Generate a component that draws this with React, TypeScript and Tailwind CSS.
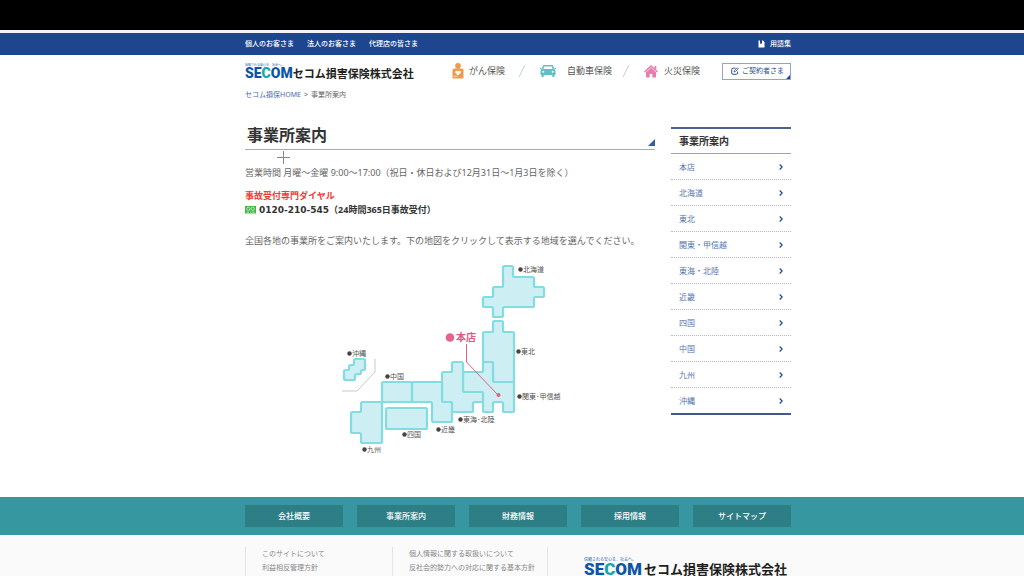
import React from "react";

type Point = [number, number];

const topLinks = ["個人のお客さま", "法人のお客さま", "代理店の皆さま"];
const offices = ["本店", "北海道", "東北", "関東・甲信越", "東海・北陸", "近畿", "四国", "中国", "九州", "沖縄"];
const footerButtons = ["会社概要", "事業所案内", "財務情報", "採用情報", "サイトマップ"];

const regions: Point[][] = [
  [[503, 266], [513, 266], [513, 277], [534, 277], [534, 287], [544, 287], [544, 297], [534, 297], [534, 307], [503, 307], [503, 317], [493, 317], [493, 307], [483, 307], [483, 297], [493, 297], [493, 287], [503, 287]],
  [[493, 321], [503, 321], [503, 332], [514, 332], [514, 382], [493, 382], [493, 362], [483, 362], [483, 332], [493, 332]],
  [[483, 362], [493, 362], [493, 382], [514, 382], [514, 412], [503, 412], [503, 402], [493, 402], [493, 412], [483, 412], [483, 392], [463, 392], [463, 372], [483, 372]],
  [[452, 362], [463, 362], [463, 392], [483, 392], [483, 402], [473, 402], [473, 412], [452, 412], [452, 402], [442, 402], [442, 372], [452, 372]],
  [[412, 382], [442, 382], [442, 402], [452, 402], [452, 422], [432, 422], [432, 402], [412, 402]],
  [[382, 382], [412, 382], [412, 402], [382, 402]],
  [[361, 402], [382, 402], [382, 443], [361, 443], [361, 433], [351, 433], [351, 412], [361, 412]],
  [[386, 408], [427, 408], [427, 429], [386, 429]],
  [[354, 359], [365, 359], [365, 370], [361, 370], [361, 374], [355, 374], [355, 380], [344, 380], [344, 370], [349, 370], [349, 365], [354, 365]],
];

const labels = [
  { name: "北海道", x: 520, y: 270 },
  { name: "東北", x: 518, y: 352 },
  { name: "関東･甲信越", x: 519, y: 397 },
  { name: "東海･北陸", x: 460, y: 420 },
  { name: "近畿", x: 438, y: 430 },
  { name: "四国", x: 404, y: 435 },
  { name: "九州", x: 364, y: 450 },
  { name: "中国", x: 387, y: 377 },
  { name: "沖縄", x: 349, y: 354 },
];

// Closed outline through the points, each corner rounded by r.
function roundedPath(points: Point[], r: number) {
  const n = points.length;
  const toward = (a: Point, b: Point): Point => [
    a[0] + Math.sign(b[0] - a[0]) * r,
    a[1] + Math.sign(b[1] - a[1]) * r,
  ];
  const parts = points.map((p, i) => {
    const start = toward(p, points[(i + n - 1) % n]);
    const end = toward(p, points[(i + 1) % n]);
    return `${i === 0 ? "M" : "L"}${start.join(" ")}Q${p.join(" ")} ${end.join(" ")}`;
  });
  return parts.join("") + "Z";
}

function Container({ className = "", children }: { className?: string; children: React.ReactNode }) {
  return (
    <div className="pl-3">
      <div className={`mx-auto max-w-[546px] ${className}`}>{children}</div>
    </div>
  );
}

function Logo({ large = false }: { large?: boolean }) {
  return (
    <a href="#home" className="block whitespace-nowrap">
      <span className={`block text-[#2b62ad] ${large ? "text-[4px] leading-[5px]" : "text-[3px] leading-[4px]"}`}>
        信頼される安心を、社会へ。
      </span>
      <span className={`flex items-center ${large ? "h-[14px] gap-0.5" : "h-[13px]"}`}>
        <span
          className={`font-['Roboto',sans-serif] font-black text-[#0f55a5] ${large ? "text-[17px] leading-[14px]" : "text-[14px] leading-[13px]"}`}
        >
          SE<span className="text-[#1aa5a8]">C</span>OM
        </span>
        <span
          className={`font-bold text-[#231f20] ${large ? "text-[13px] leading-[14px]" : "text-[11px] leading-[13px]"}`}
        >
          セコム損害保険株式会社
        </span>
      </span>
    </a>
  );
}

function Slash() {
  return (
    <svg width="8" height="14" viewBox="0 0 8 14" aria-hidden="true">
      <path d="M1 13L7 1" stroke="#c3cfd6" strokeWidth="1" />
    </svg>
  );
}

function PersonIcon() {
  return (
    <svg width="12" height="16" viewBox="0 0 12 16" aria-hidden="true">
      <circle cx="6" cy="2.900" r="2.800" fill="#f19a4a" />
      <path d="M2 5.500H10Q11.500 5.500 11.500 7.500V15.500H.5V7.500Q.5 5.500 2 5.500Z" fill="#f19a4a" />
      <path d="M6 12.500L3.300 9.800Q2.800 8 4.300 7.700Q5.500 7.600 6 8.700Q6.500 7.600 7.700 7.700Q9.200 8 8.700 9.800Z" fill="#fff" />
      <path d="M1.500 13.300H5.500" stroke="#fff" strokeWidth=".6" />
    </svg>
  );
}

function CarIcon() {
  return (
    <svg width="16" height="14" viewBox="0 0 16 14" aria-hidden="true">
      <path
        d="M3.700 1H12.300Q13 1 13.200 1.700L14.200 5Q15.500 5.400 15.500 7V11H14.500V12.200Q14.500 13.200 13.500 13.200T12.300 12.200V11H3.700V12.200Q3.700 13.200 2.500 13.200T1.500 12.200V11H.5V7Q.5 5.400 1.800 5L2.800 1.700Q3 1 3.700 1Z"
        fill="#62bfc6"
      />
      <path d="M4.200 2.400H11.800L12.600 5H3.400Z" fill="#fff" />
      <circle cx="3.300" cy="7.800" r="1" fill="#fff" />
      <circle cx="12.700" cy="7.800" r="1" fill="#fff" />
      <path d="M0 4.300H1.500M14.500 4.300H16" stroke="#62bfc6" strokeWidth="1.200" />
    </svg>
  );
}

function HouseIcon() {
  return (
    <svg width="14" height="13" viewBox="0 0 14 13" aria-hidden="true">
      <path d="M7 0L14 6.500L13 7.500L7 2.200L1 7.500L0 6.500Z" fill="#e77fae" />
      <path d="M10.500 1H12.300V5L10.500 3.400Z" fill="#e77fae" />
      <path d="M7 2.800L12 7.300V12.600H8.300V9H5.700V12.600H2V7.300Z" fill="#e77fae" />
    </svg>
  );
}

function JapanMap() {
  return (
    <svg
      width="224"
      height="196"
      viewBox="340 262 224 196"
      role="group"
      aria-label="事業所の地図"
      className="ml-[95px] block"
    >
      <g fill="#cdeff3" stroke="#82dde1" strokeWidth="2.200" strokeLinejoin="round">
        {regions.map((points, i) => (
          <path key={i} d={roundedPath(points, 1.5)} />
        ))}
      </g>
      <path d="M375 359V372L357 391H342" fill="none" stroke="#c9c9c9" strokeWidth="1" />
      <path d="M466.500 344V362L498 395" fill="none" stroke="#e0627f" strokeWidth="1" />
      <circle cx="498.500" cy="395" r="2" fill="#e0627f" />
      <circle cx="450" cy="337.500" r="4.300" fill="#e5658a" />
      <a href="#honten">
        <text x="456" y="341" fontSize="10" fontWeight="700" fill="#e0577f">
          本店
        </text>
      </a>
      {labels.map((l) => (
        <a href={`#${l.name}`} key={l.name}>
          <circle cx={l.x + 0.5} cy={l.y - 0.5} r="2.200" fill="#444" />
          <text x={l.x + 3} y={l.y + 2} fontSize="7" fill="#555">
            {l.name}
          </text>
        </a>
      ))}
    </svg>
  );
}

export default function App() {
  return (
    <div className="h-screen overflow-hidden bg-white font-['Noto_Sans','Noto_Sans_CJK_JP',sans-serif] text-[#666]">
      <div className="h-[30px] bg-black" />
      <div className="h-[3px] bg-[#f1f3f8]" />

      <div className="bg-[#1e468f] text-[7px] leading-[22px] font-medium text-white">
        <Container className="flex justify-between">
          <nav className="flex gap-[13px]">
            {topLinks.map((t) => (
              <a key={t} href="#top">
                {t}
              </a>
            ))}
          </nav>
          <a href="#glossary" className="flex items-center gap-[5px]">
            <svg width="7" height="8" viewBox="0 0 7 8" aria-hidden="true">
              <path d="M.5 .5H2V4L3 3.200L4 4V.5H5L6.500 2V7.500H.5Z" fill="#fff" />
            </svg>
            用語集
          </a>
        </Container>
      </div>

      <header>
        <Container className="flex h-8 items-center justify-between">
          <Logo />
          <nav className="flex items-center text-[9px] leading-4 text-[#555]">
            <a href="#cancer" className="flex items-center gap-[5px]">
              <PersonIcon />
              がん保険
            </a>
            <span className="mr-[14px] ml-[13px]">
              <Slash />
            </span>
            <a href="#car" className="flex items-center gap-[11px]">
              <CarIcon />
              自動車保険
            </a>
            <span className="mr-[14px] ml-[10px]">
              <Slash />
            </span>
            <a href="#fire" className="flex items-center gap-[6px]">
              <HouseIcon />
              火災保険
            </a>
            <a
              href="#member"
              className="relative ml-[22px] flex h-[17px] w-[69px] items-center gap-[3px] border border-[#8ea6cf] pl-2 text-[7px] text-[#2c5299]"
            >
              <svg width="8" height="8" viewBox="0 0 8 8" fill="none" stroke="#2c5299" aria-hidden="true">
                <path d="M4.500 1.200H2Q.7 1.200 .7 2.500V6Q.7 7.300 2 7.300H5.300Q6.600 7.300 6.600 6V4.500" />
                <path d="M3 5L3.400 3.700L6.400 .7L7.400 1.700L4.400 4.600Z" strokeWidth=".8" />
              </svg>
              ご契約者さま
              <svg width="4" height="4" viewBox="0 0 4 4" className="absolute right-0 bottom-0" aria-hidden="true">
                <path d="M4 0V4H0Z" fill="#1e468f" />
              </svg>
            </a>
          </nav>
        </Container>
      </header>

      <Container className="flex gap-[3px] text-[7px] leading-4">
        <a href="#home" className="text-[#4a6ba8]">
          セコム損保HOME
        </a>
        <span>&gt;</span>
        <span>事業所案内</span>
      </Container>

      <Container className="flex min-h-[394px] items-start justify-between gap-4 pt-6">
        <main className="min-w-0 flex-1">
          <div className="relative border-b border-[#94acd6] pb-1.5 pl-0.5">
            <h1 className="text-[16px] leading-4 font-bold text-[#333]">事業所案内</h1>
            <svg width="7" height="7" viewBox="0 0 7 7" className="absolute right-0 bottom-[3px]" aria-hidden="true">
              <path d="M7 0V7H0Z" fill="#2c5fae" />
            </svg>
            <svg width="13" height="13" viewBox="0 0 13 13" className="absolute top-6 left-8" aria-hidden="true">
              <path d="M6.500 0V13M0 6.500H13" stroke="#888" strokeWidth="1" />
            </svg>
          </div>
          <p className="mt-4 text-[9px] leading-[14px]">
            営業時間 月曜～金曜 9:00～17:00（祝日・休日および12月31日～1月3日を除く）
          </p>
          <p className="mt-2 text-[9px] leading-[15px] font-bold text-[#ee3a34]">事故受付専門ダイヤル</p>
          <p className="flex items-center text-[9px] leading-[14px] font-bold text-[#333]">
            <svg width="11" height="8" viewBox="0 0 11 8" className="mr-[3px]" aria-hidden="true">
              <path d="M0 0H11V7.500H0Z" fill="#43b548" />
              <circle cx="3.300" cy="2.800" r="1.600" fill="none" stroke="#d8f3d6" strokeWidth=".8" />
              <circle cx="7.700" cy="2.800" r="1.600" fill="none" stroke="#d8f3d6" strokeWidth=".8" />
              <path d="M1.500 6.200H4M5 6.200H6.200M7.200 6.200H9.500" stroke="#d8f3d6" strokeWidth=".8" />
            </svg>
            <a href="tel:0120210545" className="font-['DejaVu_Sans',sans-serif]">
              0120-210-545
            </a>
            （24時間365日事故受付）
          </p>
          <p className="mt-[17px] mb-[14px] text-[9px] leading-[14px]">
            全国各地の事業所をご案内いたします。下の地図をクリックして表示する地域を選んでください。
          </p>
          <JapanMap />
        </main>

        <aside className="w-[120px] shrink-0 border-t-2 border-b-2 border-t-[#4d608c] border-b-[#41578f]">
          <h2 className="border-b border-[#8ea6d0] pl-2 text-[10px] leading-6 font-bold text-[#333]">事業所案内</h2>
          <ul className="text-[8px] leading-3 text-[#5575ae]">
            {offices.map((o) => (
              <li key={o} className="border-b border-dotted border-[#bbb] last:border-b-0">
                <a href="#office" className="flex h-[25px] items-center justify-between px-2">
                  {o}
                  <svg width="4" height="6" viewBox="0 0 4 6" fill="none" aria-hidden="true">
                    <path d="M.7 .5L3.200 3L.7 5.500" stroke="#27509b" strokeWidth="1.300" />
                  </svg>
                </a>
              </li>
            ))}
          </ul>
        </aside>
      </Container>

      <div className="bg-[#3797a0] py-2">
        <Container className="grid grid-cols-5 gap-[14px]">
          {footerButtons.map((b) => (
            <a key={b} href="#footer" className="bg-[#2e7e86] text-center text-[8px] leading-[22px] font-medium text-white">
              {b}
            </a>
          ))}
        </Container>
      </div>

      <footer className="bg-[#fafafa] pt-3">
        <Container className="flex text-[7px] leading-[14px] text-[#888]">
          <div className="h-20 w-[147px] border-l border-[#e5e5e5] pl-4">
            <a href="#about" className="block">
              このサイトについて
            </a>
            <a href="#policy" className="block">
              利益相反管理方針
            </a>
          </div>
          <div className="h-20 w-[155px] border-l border-[#e5e5e5] pl-4">
            <a href="#privacy" className="block">
              個人情報に関する取扱いについて
            </a>
            <a href="#basic" className="block">
              反社会的勢力への対応に関する基本方針
            </a>
          </div>
          <div className="h-20 border-l border-[#e5e5e5] pt-2.5 pl-9">
            <Logo large />
          </div>
        </Container>
      </footer>
    </div>
  );
}
